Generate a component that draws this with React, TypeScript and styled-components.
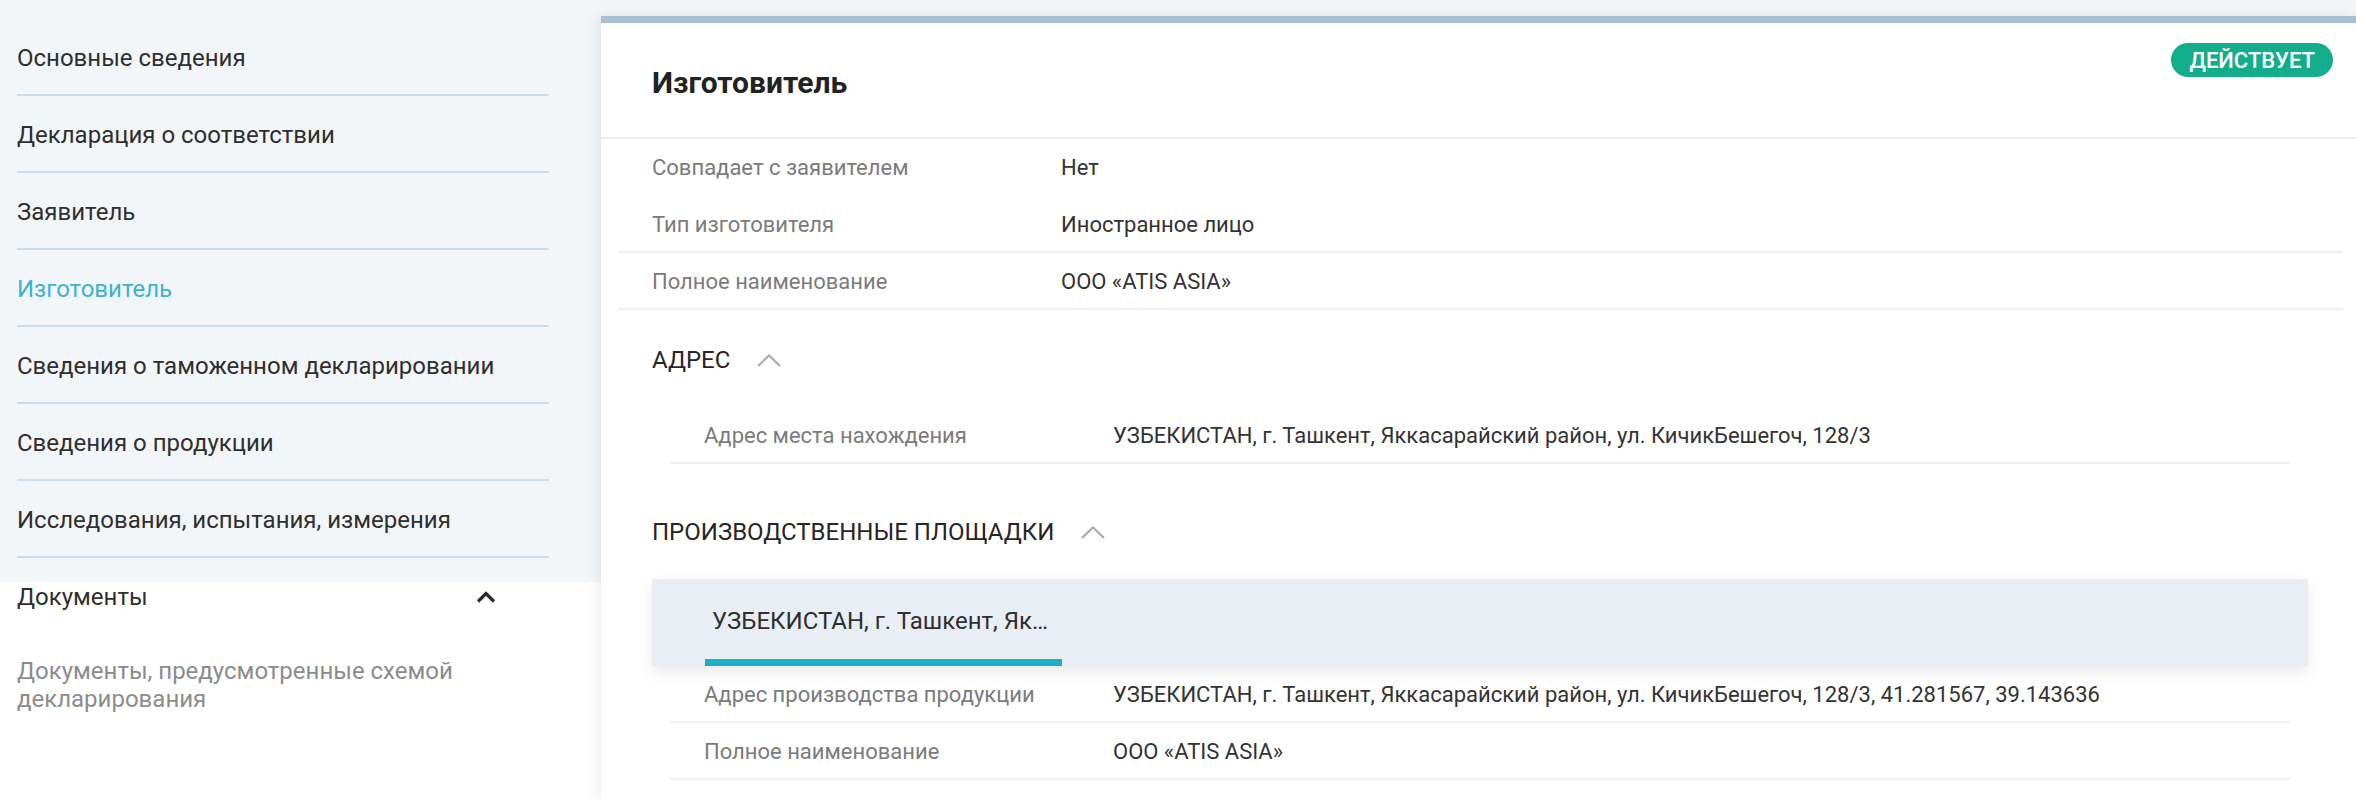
import styled, { createGlobalStyle } from 'styled-components'

// --- Global ---

const GlobalStyle = createGlobalStyle`
  html, body {
    margin: 0;
    padding: 0;
    background: #f2f5f8;
    font-family: Roboto, "Liberation Sans", sans-serif;
    color: #333333;
  }
  * {
    box-sizing: border-box;
  }
`;

// --- Layout ---

const Layout = styled.div`
  display: grid;
  grid-template-columns: 601px 1fr;
  height: 800px;
  overflow: hidden;
`;

// --- Sidebar ---

const Sidebar = styled.aside`
  display: flex;
  flex-direction: column;
`;

const NavList = styled.ul`
  list-style: none;
  margin: 0;
  padding: 19px 52px 24px 17px;
  background: #f3f6f9;
`;

const NavItem = styled.li<{ $active?: boolean }>`
  height: 77px;
  display: flex;
  align-items: center;
  padding-top: 3px;
  border-bottom: 2px solid #cbdbe7;
  font-size: 24px;
  color: ${props => props.$active ? '#3cb2d2' : '#2f2f2f'};
  cursor: pointer;
`;

const DocsBlock = styled.div`
  flex: 1;
  background: #ffffff;
  padding: 0 52px 0 17px;
`;

const DocsHeader = styled.div`
  display: flex;
  align-items: center;
  justify-content: space-between;
  height: 30px;
  font-size: 24px;
  color: #2f2f2f;
`;

const DocsChevron = styled.svg`
  margin-right: 52px;
  display: block;
`;

const DocsSubItem = styled.div`
  margin-top: 45px;
  font-size: 24px;
  line-height: 28px;
  color: #8c8c8c;
`;

// --- Main panel ---

const Main = styled.main`
  display: flex;
  flex-direction: column;
  padding-top: 16px;
`;

const Panel = styled.section`
  position: relative;
  flex: 1;
  background: #ffffff;
  border-top: 7px solid #a9c0d4;
  box-shadow: -4px 0 12px rgba(0, 0, 0, 0.07);
`;

const PanelHeader = styled.header`
  height: 116px;
  display: flex;
  align-items: center;
  padding: 4px 0 0 51px;
  border-bottom: 2px solid #ececec;
`;

const Title = styled.h1`
  margin: 0;
  font-size: 30px;
  font-weight: 700;
  color: #222222;
`;

const StatusBadge = styled.span`
  position: absolute;
  top: 20px;
  right: 23px;
  height: 34px;
  padding: 0 18px;
  border-radius: 17px;
  background: #13ad8b;
  color: #ffffff;
  font-size: 22px;
  font-weight: 500;
  text-transform: uppercase;
  display: flex;
  align-items: center;
`;

const Rows = styled.div<{ $nested?: boolean }>`
  margin: ${props => props.$nested ? '0 66px 0 69px' : '0 13px 0 17px'};
`;

const Row = styled.div<{ $plain?: boolean }>`
  display: flex;
  align-items: center;
  height: 57px;
  padding: 1px 0 0 34px;
  border-bottom: 2px solid ${props => props.$plain ? 'transparent' : '#efefef'};
  font-size: 22px;
`;

const Label = styled.span`
  width: 409px;
  flex-shrink: 0;
  color: #7b7b7b;
`;

const Value = styled.span`
  color: #333333;
`;

const SectionHeading = styled.h2<{ $gap?: number }>`
  margin: ${props => props.$gap ?? 25}px 0 24px;
  padding: 2px 0 0 51px;
  height: 48px;
  display: flex;
  align-items: center;
  gap: 26px;
  font-size: 24px;
  font-weight: 400;
  color: #262626;
  text-transform: uppercase;
`;

const TabStrip = styled.div`
  margin: 0 48px 0 51px;
  height: 87px;
  display: flex;
  padding-left: 53px;
  background: #e8eef4;
  box-shadow: 0 6px 14px rgba(0, 0, 0, 0.09);
  position: relative;
`;

const Tab = styled.div<{ $active?: boolean }>`
  width: 357px;
  padding: 4px 7px 0;
  display: flex;
  align-items: center;
  font-size: 24px;
  color: #2f2f2f;
  border-bottom: 7px solid ${props => props.$active ? '#1bafc9' : 'transparent'};
`;

const TabText = styled.span`
  white-space: nowrap;
  overflow: hidden;
  text-overflow: ellipsis;
`;

// --- Icons ---

const ChevronUp = ({ color = '#a9a9a9' }: { color?: string }) => (
  <svg width="26" height="15" viewBox="0 0 26 15" aria-hidden="true">
    <path d="M2 13 L13 2.5 L24 13" fill="none" stroke={color} strokeWidth="2" />
  </svg>
);

// --- Data ---

const navItems = [
  'Основные сведения',
  'Декларация о соответствии',
  'Заявитель',
  'Изготовитель',
  'Сведения о таможенном декларировании',
  'Сведения о продукции',
  'Исследования, испытания, измерения',
];

const address = 'УЗБЕКИСТАН, г. Ташкент, Яккасарайский район, ул. КичикБешегоч, 128/3';

export default function App() {
  return (
    <>
      <GlobalStyle />
      <Layout>
        <Sidebar>
          <NavList>
            {navItems.map(item => (
              <NavItem key={item} $active={item === 'Изготовитель'}>
                {item}
              </NavItem>
            ))}
          </NavList>
          <DocsBlock>
            <DocsHeader>
              Документы
              <DocsChevron width="22" height="14" viewBox="0 0 22 14" aria-hidden="true">
                <path d="M3 11.5 L11 3.5 L19 11.5" fill="none" stroke="#2b2b2b" strokeWidth="3.2" />
              </DocsChevron>
            </DocsHeader>
            <DocsSubItem>Документы, предусмотренные схемой декларирования</DocsSubItem>
          </DocsBlock>
        </Sidebar>

        <Main>
          <Panel>
            <StatusBadge>Действует</StatusBadge>
            <PanelHeader>
              <Title>Изготовитель</Title>
            </PanelHeader>

            <Rows>
              <Row $plain>
                <Label>Совпадает с заявителем</Label>
                <Value>Нет</Value>
              </Row>
              <Row>
                <Label>Тип изготовителя</Label>
                <Value>Иностранное лицо</Value>
              </Row>
              <Row>
                <Label>Полное наименование</Label>
                <Value>ООО «ATIS ASIA»</Value>
              </Row>
            </Rows>

            <SectionHeading>
              Адрес
              <ChevronUp />
            </SectionHeading>
            <Rows $nested>
              <Row>
                <Label>Адрес места нахождения</Label>
                <Value>{address}</Value>
              </Row>
            </Rows>

            <SectionHeading $gap={43}>
              Производственные площадки
              <ChevronUp />
            </SectionHeading>
            <TabStrip>
              <Tab $active>
                <TabText>{address}</TabText>
              </Tab>
            </TabStrip>
            <Rows $nested>
              <Row>
                <Label>Адрес производства продукции</Label>
                <Value>{address}, 41.281567, 39.143636</Value>
              </Row>
              <Row>
                <Label>Полное наименование</Label>
                <Value>ООО «ATIS ASIA»</Value>
              </Row>
            </Rows>
          </Panel>
        </Main>
      </Layout>
    </>
  )
}
